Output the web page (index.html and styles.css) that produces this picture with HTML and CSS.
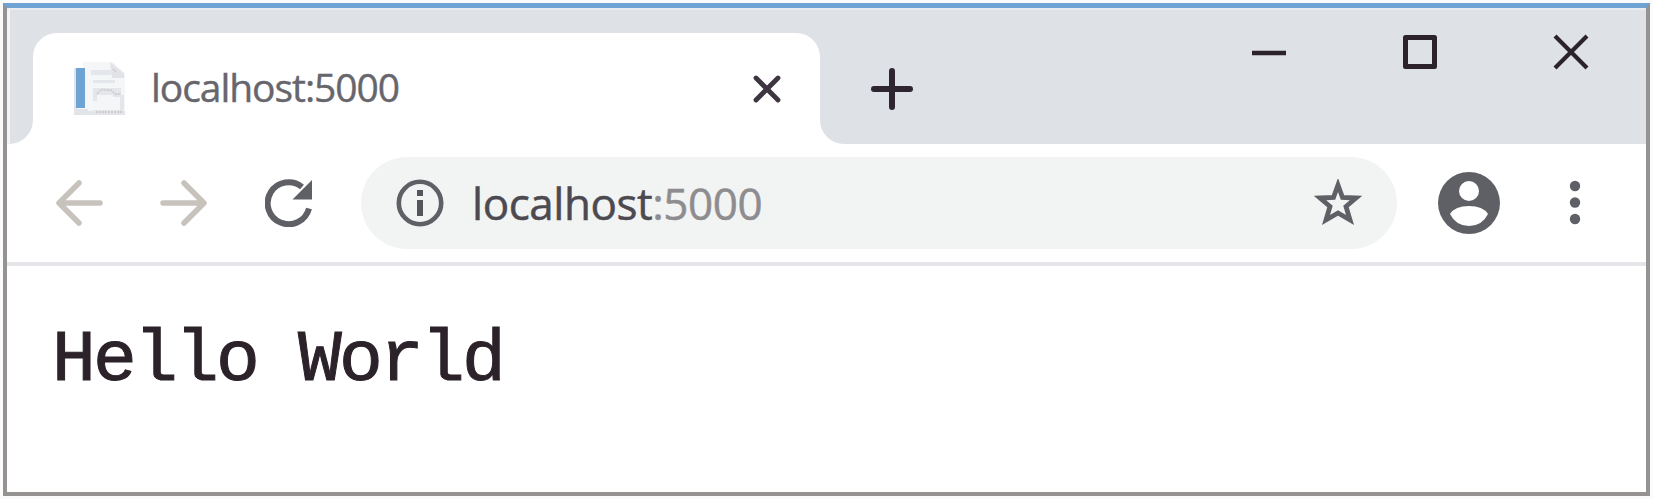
FILE: index.html
```
<!DOCTYPE html>
<html lang="en">
<head>
<meta charset="utf-8">
<title>localhost:5000</title>
<link rel="stylesheet" href="styles.css">
</head>
<body>
<div class="window">
  <header class="tabstrip">
    <svg class="flare" viewBox="0 0 24 24"><path d="M24 0V24H0A24 24 0 0 0 24 0Z"/></svg>
    <div class="tab">
      <svg class="favicon" viewBox="0 0 54 56">
        <path d="M10 1H40L52 13V54H1V7H10Z" fill="#f5f6f7"/>
        <path d="M1 7H4V48H15V50H52V54H1Z" fill="#e1e4e9"/>
        <path d="M18 9H38V14H18ZM20 19H42V22H20ZM20 27H48V36H40V34H24V40H20ZM47 34H51V52H20V49H47Z" fill="#e3e6ea"/>
        <path d="M37 1L51 12V17H39Z" fill="#e1e3e7"/>
        <path d="M24 33Q28 27 32 29L38 29L42 33H48M23 51H50M40 8L43 11" fill="none" stroke="#cdc5be" stroke-width="1.3" stroke-dasharray="2 1"/>
        <path d="M3 7H12V47H3Z" fill="#6fa3d3"/>
      </svg>
      <span class="tab-title">localhost:5000</span>
      <svg class="tab-close" viewBox="0 0 30 30"><path d="M4 4L26 26M26 4L4 26"/></svg>
    </div>
    <svg class="flare" viewBox="0 0 24 24"><path d="M0 0V24H24A24 24 0 0 1 0 0Z"/></svg>
    <svg class="new-tab" viewBox="0 0 42 42"><path d="M21 3V39M3 21H39"/></svg>
    <div class="controls">
      <svg viewBox="0 0 38 38"><path d="M2 20H36" stroke-width="4.5"/></svg>
      <svg viewBox="0 0 38 38"><path d="M4.5 4.5H33.5V33.5H4.5Z" stroke-width="5" stroke-linejoin="round"/></svg>
      <svg viewBox="0 0 38 38"><path d="M3 3L35 35M35 3L3 35" stroke-width="4.2"/></svg>
    </div>
  </header>
  <nav class="toolbar">
    <svg class="nav-icon back" viewBox="0 0 48 48"><path d="M45 24H5M24 4L4 24L24 44"/></svg>
    <svg class="nav-icon forward" viewBox="0 0 48 48"><path d="M3 24H43M24 4L44 24L24 44"/></svg>
    <svg class="nav-icon reload" viewBox="0 0 48 48"><path d="M44 29.500A21 21 0 1 1 37 8" fill="none" stroke="#5f6066" stroke-width="6"/><path d="M47 1V20.500H27.500Z" fill="#5f6066"/></svg>
    <div class="omnibox">
      <svg class="info" viewBox="0 0 48 48"><circle cx="24" cy="24" r="21.200" fill="none" stroke="#5f6066" stroke-width="4.600"/><path d="M21 11H27V17H21ZM21 21H27V37H21Z" fill="#55555c"/></svg>
      <span class="address">localhost<span class="port">:5000</span></span>
      <svg class="star" viewBox="0 0 48 48"><path d="M24 6L28.500 18.500L42 19L32 27.500L36 41L24 34L12 41L16 27.500L6 19L19.500 18.500Z"/></svg>
    </div>
    <svg class="avatar" viewBox="0 0 64 64"><circle cx="32" cy="32" r="31"/><circle class="cut" cx="32" cy="20" r="10"/><path class="cut" d="M13 43Q18 35 32 35Q46 35 51 43Q45 55 32 55Q19 55 13 43Z"/></svg>
    <svg class="menu" viewBox="0 0 12 46"><circle cx="6" cy="6" r="5.200"/><circle cx="6" cy="22.500" r="5.200"/><circle cx="6" cy="39" r="5.200"/></svg>
  </nav>
  <main class="page">Hello World</main>
</div>
</body>
</html>
```
FILE: styles.css
```
* { box-sizing: border-box; }
body { margin: 0; padding: 3px; background: #fbfbfb; }
svg { display: block; flex: none; }

.window {
  width: 1647px;
  height: 493px;
  border: 4px solid #979292;
  border-top: 5px solid #6fa3d3;
  background: #fff;
  overflow: hidden;
}

.tabstrip {
  display: flex;
  height: 136px;
  padding-left: 2px;
  background: #dee1e6;
  border-top: 2px solid #e9ecee;
  box-shadow: inset 3px 0 #f3f5f6;
}
.flare { width: 24px; height: 24px; align-self: flex-end; fill: #fff; }
.tab {
  display: flex;
  align-items: center;
  width: 787px;
  height: 111px;
  margin-top: 23px;
  padding: 0 38px 0 40px;
  border-radius: 24px 24px 0 0;
  background: #fff;
}
.favicon { width: 54px; height: 56px; }
.tab-title {
  margin: 0 0 4px 24px;
  font: 39px/50px "Open Sans", "Noto Sans", sans-serif;
  letter-spacing: -1.05px;
  color: #66666c;
  -webkit-text-stroke: 0.4px #66666c;
}
.tab-close { width: 30px; height: 30px; margin-left: auto; stroke: #3d353f; stroke-width: 4.8; stroke-linecap: round; }
.new-tab { width: 42px; height: 42px; margin: 58px 0 0 27px; stroke: #2f2530; stroke-width: 6; stroke-linecap: round; }
.controls { display: flex; gap: 113px; margin: 23px 0 0 337px; }
.controls svg { width: 38px; height: 38px; fill: none; stroke: #2c222c; }

.toolbar {
  display: flex;
  align-items: center;
  height: 122px;
  padding-left: 48px;
  border-bottom: 4px solid #e3e5e9;
}
.nav-icon { width: 48px; height: 48px; }
.back, .forward { fill: none; stroke: #c8c2bc; stroke-width: 5.5; stroke-linecap: round; stroke-linejoin: round; }
.forward { margin-left: 57px; }
.reload { margin-left: 57px; }
.omnibox {
  display: flex;
  align-items: center;
  width: 1036px;
  height: 92px;
  margin-left: 48px;
  padding: 0 35px 0 35px;
  border-radius: 46px;
  background: #f2f4f4;
}
.info { width: 48px; height: 48px; }
.address {
  margin-left: 28px;
  font: 44px/60px "Open Sans", "Noto Sans", sans-serif;
  letter-spacing: -0.45px;
  color: #4c4950;
  -webkit-text-stroke: 0.5px currentColor;
}
.port { color: #8e8c8f; }
.star { width: 48px; height: 48px; margin-left: auto; fill: none; stroke: #5f6066; stroke-width: 4.8; }
.avatar { width: 64px; height: 64px; margin-left: 40px; fill: #5f6066; }
.cut { fill: #fff; }
.menu { width: 12px; height: 46px; margin-left: 68px; fill: #5f6066; }

.page {
  padding: 50px 0 0 45px;
  font: 73px/90px "Liberation Mono", monospace;
  letter-spacing: -2.8px;
  color: #2c222a;
  -webkit-text-stroke: 1px #2c222a;
}
```
